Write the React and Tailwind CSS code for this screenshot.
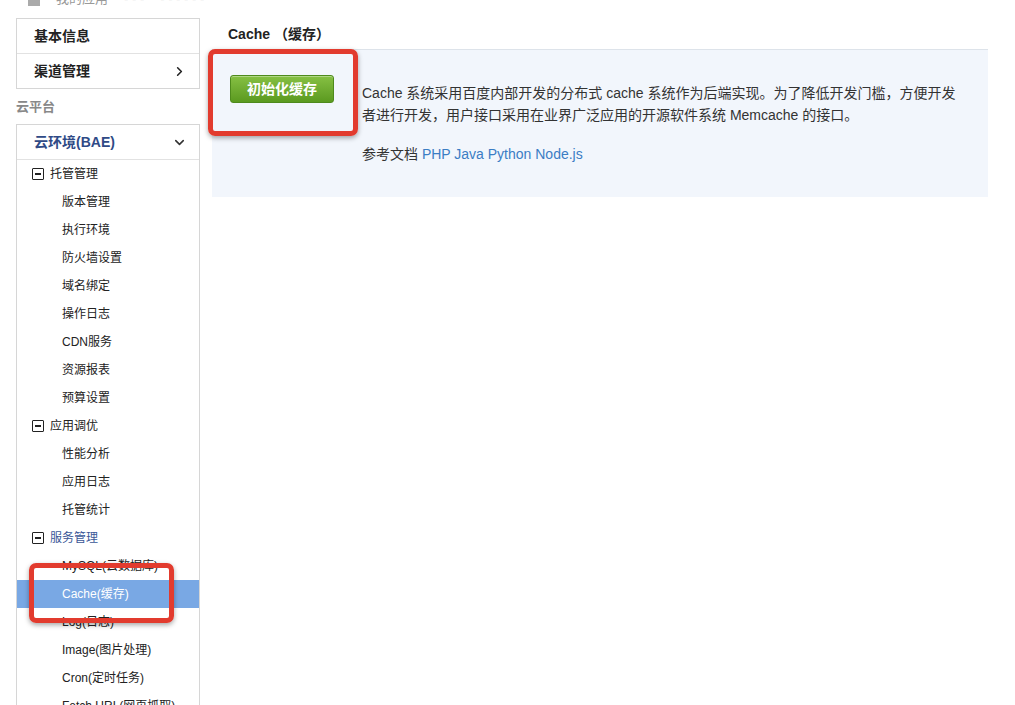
import { ChevronRight, ChevronDown } from 'lucide-react';

const font = { fontFamily: '"Liberation Sans", "Noto Sans CJK SC", sans-serif' };

const tree = [
    { label: '托管管理', group: true },
    { label: '版本管理' },
    { label: '执行环境' },
    { label: '防火墙设置' },
    { label: '域名绑定' },
    { label: '操作日志' },
    { label: 'CDN服务' },
    { label: '资源报表' },
    { label: '预算设置' },
    { label: '应用调优', group: true },
    { label: '性能分析' },
    { label: '应用日志' },
    { label: '托管统计' },
    { label: '服务管理', group: true, blue: true },
    { label: 'MySQL(云数据库)' },
    { label: 'Cache(缓存)', active: true },
    { label: 'Log(日志)' },
    { label: 'Image(图片处理)' },
    { label: 'Cron(定时任务)' },
    { label: 'Fetch URL(网页抓取)' },
];

const MinusBox = () => (
    <span className="w-[12px] h-[12px] border-[1.5px] border-[#222] rounded-[1px] flex items-center justify-center">
        <span className="w-[6px] h-[1.5px] bg-[#222]" />
    </span>
);

const App = () => {
    return (
        <div className="relative w-[1015px] h-[705px] overflow-hidden bg-white text-[#333]" style={font}>
            {/* cut-off top breadcrumb */}
            <div className="absolute top-[-11px] left-[28px] flex items-center gap-4 text-[13px] text-[#999]">
                <span className="w-[12px] h-[14px] bg-[#aaa]" />
                <span>我的应用</span>
                <span>- - -</span>
                <span>- - - - - -</span>
            </div>

            <div className="flex pt-[18px] pl-[16px]">
                {/* sidebar */}
                <aside className="w-[184px] shrink-0">
                    <div className="border border-[#d6d6d6]">
                        <div className="h-[35px] flex items-center pl-[17px] text-[14px] font-bold text-[#222] border-b border-[#e2e2e2]">基本信息</div>
                        <div className="h-[34px] flex items-center justify-between pl-[17px] pr-[12px] text-[14px] font-bold text-[#222]">
                            渠道管理
                            <ChevronRight size={15} strokeWidth={2.5} />
                        </div>
                    </div>
                    <div className="h-[35px] flex items-center text-[13px] text-[#888] font-bold">云平台</div>
                    <div className="border border-[#d6d6d6] border-b-0 pb-[40px]">
                        <div className="h-[35px] flex items-center justify-between pl-[17px] pr-[12px] text-[14px] font-bold text-[#2f4a86] border-b border-[#e2e2e2]">
                            云环境(BAE)
                            <ChevronDown size={15} strokeWidth={2.5} className="text-[#333]" />
                        </div>
                        {tree.map((item) =>
                            item.group ? (
                                <div key={item.label} className="h-[28px] flex items-center gap-[6px] pl-[15px] text-[12px]">
                                    <MinusBox />
                                    <span className={item.blue ? 'text-[#3a5797]' : 'text-[#222]'}>{item.label}</span>
                                </div>
                            ) : (
                                <div
                                    key={item.label}
                                    className={`h-[28px] flex items-center pl-[45px] text-[12px] ${item.active ? 'bg-[#79a8e4] text-white' : 'text-[#222]'}`}
                                >
                                    {item.label}
                                </div>
                            )
                        )}
                    </div>
                </aside>

                {/* main */}
                <main className="ml-[12px] w-[776px]">
                    <div className="h-[32px] flex items-start pl-[16px] pt-[6px] text-[14px] font-bold text-[#222] border-b border-[#dde3ea]">
                        Cache （缓存）
                    </div>
                    <div className="h-[147px] bg-[#f2f6fc] flex pl-[18px]">
                        <div className="pt-[25px] w-[132px] shrink-0">
                            <button className="w-[104px] h-[28px] rounded-[3px] border border-[#4e8a1c] bg-gradient-to-b from-[#86c043] to-[#5b9a1f] text-white text-[14px] font-bold shadow-[inset_0_1px_0_rgba(255,255,255,0.35)]">
                                初始化缓存
                            </button>
                        </div>
                        <div className="pt-[32px] text-[14px] leading-[22px] text-[#333]">
                            <p className="w-[600px]">Cache 系统采用百度内部开发的分布式 cache 系统作为后端实现。为了降低开发门槛，方便开发者进行开发，用户接口采用在业界广泛应用的开源软件系统 Memcache 的接口。</p>
                            <p className="mt-[17px]">
                                参考文档 <span className="text-[#3b7dc4]">PHP Java Python Node.js</span>
                            </p>
                        </div>
                    </div>
                </main>
            </div>

            {/* annotation boxes */}
            <div className="absolute left-[208px] top-[49px] w-[150px] h-[87px] border-[5px] border-[#e23b2e] rounded-[7px] shadow-[0_2px_5px_rgba(0,0,0,0.35)]" />
            <div className="absolute left-[29px] top-[563px] w-[145px] h-[60px] border-[5px] border-[#e23b2e] rounded-[7px] shadow-[0_2px_5px_rgba(0,0,0,0.35)]" />
        </div>
    );
};

export default App;
